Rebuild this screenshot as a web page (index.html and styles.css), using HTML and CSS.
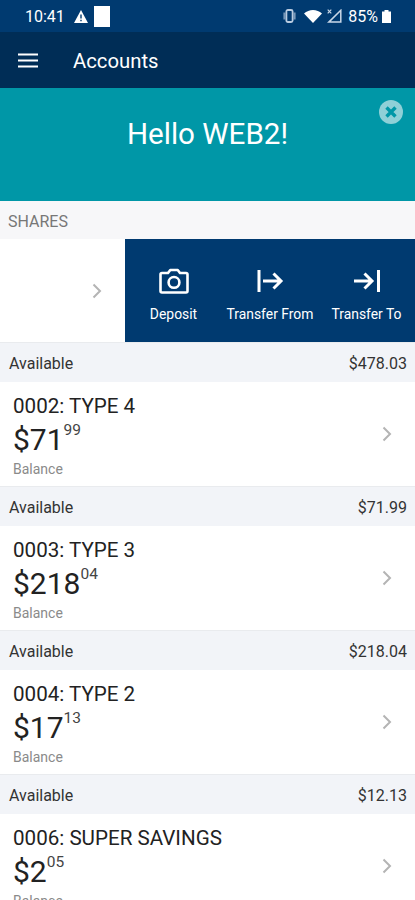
FILE: index.html
```html
<!DOCTYPE html>
<html lang="en">
<head>
    <meta charset="UTF-8">
    <meta name="viewport" content="width=device-width, initial-scale=1.0">
    <title>Accounts</title>
    <link rel="stylesheet" href="styles.css">
</head>
<body>
    <div class="status-bar">
        <span class="time">10:41</span>
        <svg class="warning" width="14" height="13" viewBox="0 0 14 13">
            <path d="M7 0L14 13H0z" fill="#fff"/>
            <path d="M7 4.5v4M7 9.7v1.6" stroke="#003a70" stroke-width="1.4"/>
        </svg>
        <span class="block"></span>
        <div class="status-right">
            <svg class="vibrate" width="13" height="14" viewBox="0 0 13 14" fill="none" stroke="#b9cbe0">
                <rect x="3.4" y="1" width="6.2" height="12" rx="1.5" stroke-width="1.8"/>
                <path d="M1.400 3.500v7M11.600 3.500v7" stroke-width="2" stroke-opacity=".65"/>
            </svg>
            <svg class="wifi" width="18" height="13" viewBox="0 0 18 13">
                <path d="M9 13L0 3.600C5-1.200 13-1.200 18 3.600z" fill="#fff"/>
            </svg>
            <svg class="signal" width="15" height="14" viewBox="0 0 15 14" fill="none" stroke="#c9d7e7">
                <path d="M13.800 1.300v11.800H1.800z" stroke-width="1.5"/>
                <path d="M.7.7l3.600 3.600M4.300.7L.7 4.300" stroke-width="1.2"/>
            </svg>
            <span class="percent">85%</span>
            <svg width="9" height="13" viewBox="0 0 9 13">
                <path d="M2.500 0h4v1.500H9V13H0V1.500h2.500z" fill="#fff"/>
            </svg>
        </div>
    </div>

    <header class="header">
        <svg class="menu" width="20" height="15" viewBox="0 0 20 15" stroke="#fff" stroke-width="2">
            <path d="M0 1.500h20M0 7.500h20M0 13.500h20"/>
        </svg>
        <h1>Accounts</h1>
    </header>

    <div class="banner">
        <h2>Hello WEB2!</h2>
        <svg class="close" width="24" height="24" viewBox="0 0 24 24">
            <circle cx="12" cy="12" r="12" fill="#8fd0d7"/>
            <path d="M7.500 7.500l9 9M16.500 7.500l-9 9" stroke="#0097a7" stroke-width="3.400"/>
        </svg>
    </div>

    <div class="section-title">SHARES</div>

    <div class="swipe-row">
        <div class="swiped">
            <svg class="chevron" width="10" height="16" viewBox="0 0 10 16"><path d="M1.500 1.500L8 8l-6.500 6.500"/></svg>
        </div>
        <div class="actions">
            <div class="action deposit">
                <svg width="30" height="28" viewBox="0 0 30 28" fill="none" stroke="#fff" stroke-width="2.600" stroke-linejoin="round">
                    <path d="M3 6h6l2.300-3h7.400L21 6h6q1.500 0 1.500 1.500V24q0 1.500-1.500 1.500H3Q1.500 25.500 1.500 24V7.500Q1.500 6 3 6z"/>
                    <circle cx="15" cy="15.400" r="5.400"/>
                </svg>
                <span>Deposit</span>
            </div>
            <div class="action from">
                <svg width="30" height="28" viewBox="0 0 30 28" fill="none" stroke="#fff" stroke-width="3">
                    <path d="M4 3v22M8 14h18M18.500 6.500l7.500 7.500-7.500 7.500"/>
                </svg>
                <span>Transfer From</span>
            </div>
            <div class="action to">
                <svg width="30" height="28" viewBox="0 0 30 28" fill="none" stroke="#fff" stroke-width="3">
                    <path d="M26.500 3v22M2 14h18M12.500 6.500l7.500 7.500-7.500 7.500"/>
                </svg>
                <span>Transfer To</span>
            </div>
        </div>
    </div>
    <div class="available"><span>Available</span><span>$478.03</span></div>

    <div class="account">
        <div>
            <div class="name">0002: TYPE 4</div>
            <div class="amount">$71<sup>99</sup></div>
            <div class="label">Balance</div>
        </div>
        <svg class="chevron" width="10" height="16" viewBox="0 0 10 16"><path d="M1.500 1.500L8 8l-6.500 6.500"/></svg>
    </div>
    <div class="available"><span>Available</span><span>$71.99</span></div>

    <div class="account">
        <div>
            <div class="name">0003: TYPE 3</div>
            <div class="amount">$218<sup>04</sup></div>
            <div class="label">Balance</div>
        </div>
        <svg class="chevron" width="10" height="16" viewBox="0 0 10 16"><path d="M1.500 1.500L8 8l-6.500 6.500"/></svg>
    </div>
    <div class="available"><span>Available</span><span>$218.04</span></div>

    <div class="account">
        <div>
            <div class="name">0004: TYPE 2</div>
            <div class="amount">$17<sup>13</sup></div>
            <div class="label">Balance</div>
        </div>
        <svg class="chevron" width="10" height="16" viewBox="0 0 10 16"><path d="M1.500 1.500L8 8l-6.500 6.500"/></svg>
    </div>
    <div class="available"><span>Available</span><span>$12.13</span></div>

    <div class="account">
        <div>
            <div class="name">0006: SUPER SAVINGS</div>
            <div class="amount">$2<sup>05</sup></div>
            <div class="label">Balance</div>
        </div>
        <svg class="chevron" width="10" height="16" viewBox="0 0 10 16"><path d="M1.500 1.500L8 8l-6.500 6.500"/></svg>
    </div>
</body>
</html>
```
FILE: styles.css
```css
* {
    box-sizing: border-box;
}
body {
    font-family: Roboto, sans-serif;
    background-color: #fff;
    color: #222;
    margin: 0;
    height: 900px;
    overflow: hidden;
}
h1, h2 {
    margin: 0;
    font-weight: 400;
}
.status-bar {
    display: flex;
    align-items: center;
    height: 32px;
    padding: 0 24px 0 25px;
    background-color: #003a70;
    color: #fff;
    font-size: 16px;
}
.warning {
    margin-left: 9px;
}
.block {
    width: 16px;
    height: 21px;
    margin-left: 6px;
    background-color: #fff;
}
.status-right {
    display: flex;
    align-items: center;
    margin-left: auto;
}
.wifi {
    margin-left: 8px;
}
.signal {
    margin-left: 5px;
}
.percent {
    margin: 0 4px 0 6px;
}
.header {
    display: flex;
    align-items: center;
    height: 56px;
    padding-left: 18px;
    background-color: #002d56;
    color: #fff;
}
.header h1 {
    margin-left: 35px;
    padding-top: 1px;
    font-size: 20.3px;
}
.banner {
    position: relative;
    height: 113px;
    padding-top: 27px;
    background-color: #0097a7;
    color: #fff;
    text-align: center;
}
.banner h2 {
    font-size: 29.6px;
    line-height: 38px;
}
.close {
    position: absolute;
    top: 12px;
    right: 12px;
}
.section-title {
    height: 38px;
    padding-left: 8px;
    background-color: #f7f7f9;
    color: #777;
    font-size: 16px;
    line-height: 41px;
}
.swipe-row {
    display: flex;
    height: 103px;
}
.swiped {
    display: flex;
    align-items: center;
    justify-content: flex-end;
    width: 125px;
    padding-right: 23px;
}
.chevron {
    fill: none;
    stroke: #b4b4b4;
    stroke-width: 2;
}
.actions {
    display: flex;
    flex: 1;
    background-color: #003a70;
    color: #fff;
}
.action {
    display: flex;
    flex-direction: column;
    align-items: center;
    padding-top: 28px;
    font-size: 13.9px;
    line-height: 16px;
    white-space: nowrap;
}
.action span {
    margin-top: 11px;
}
.deposit {
    width: 97px;
}
.from {
    width: 96px;
}
.to {
    width: 97px;
}
.available {
    display: flex;
    justify-content: space-between;
    height: 40px;
    padding: 0 8px 0 9px;
    border-top: 1px solid #e9ebee;
    background-color: #f2f4f8;
    color: #333;
    font-size: 16px;
    line-height: 41px;
}
.account {
    display: flex;
    align-items: center;
    justify-content: space-between;
    height: 104px;
    padding: 0 23px 0 13px;
}
.name {
    padding-top: 2px;
    font-size: 20.6px;
    line-height: 24px;
}
.amount {
    height: 43px;
    font-size: 30px;
    line-height: 43px;
}
.amount sup {
    display: inline-block;
    color: #444;
    font-size: 15.5px;
    line-height: 12px;
    vertical-align: 15px;
}
.label {
    color: #8a8a8a;
    font-size: 14px;
    line-height: 16px;
}
```
